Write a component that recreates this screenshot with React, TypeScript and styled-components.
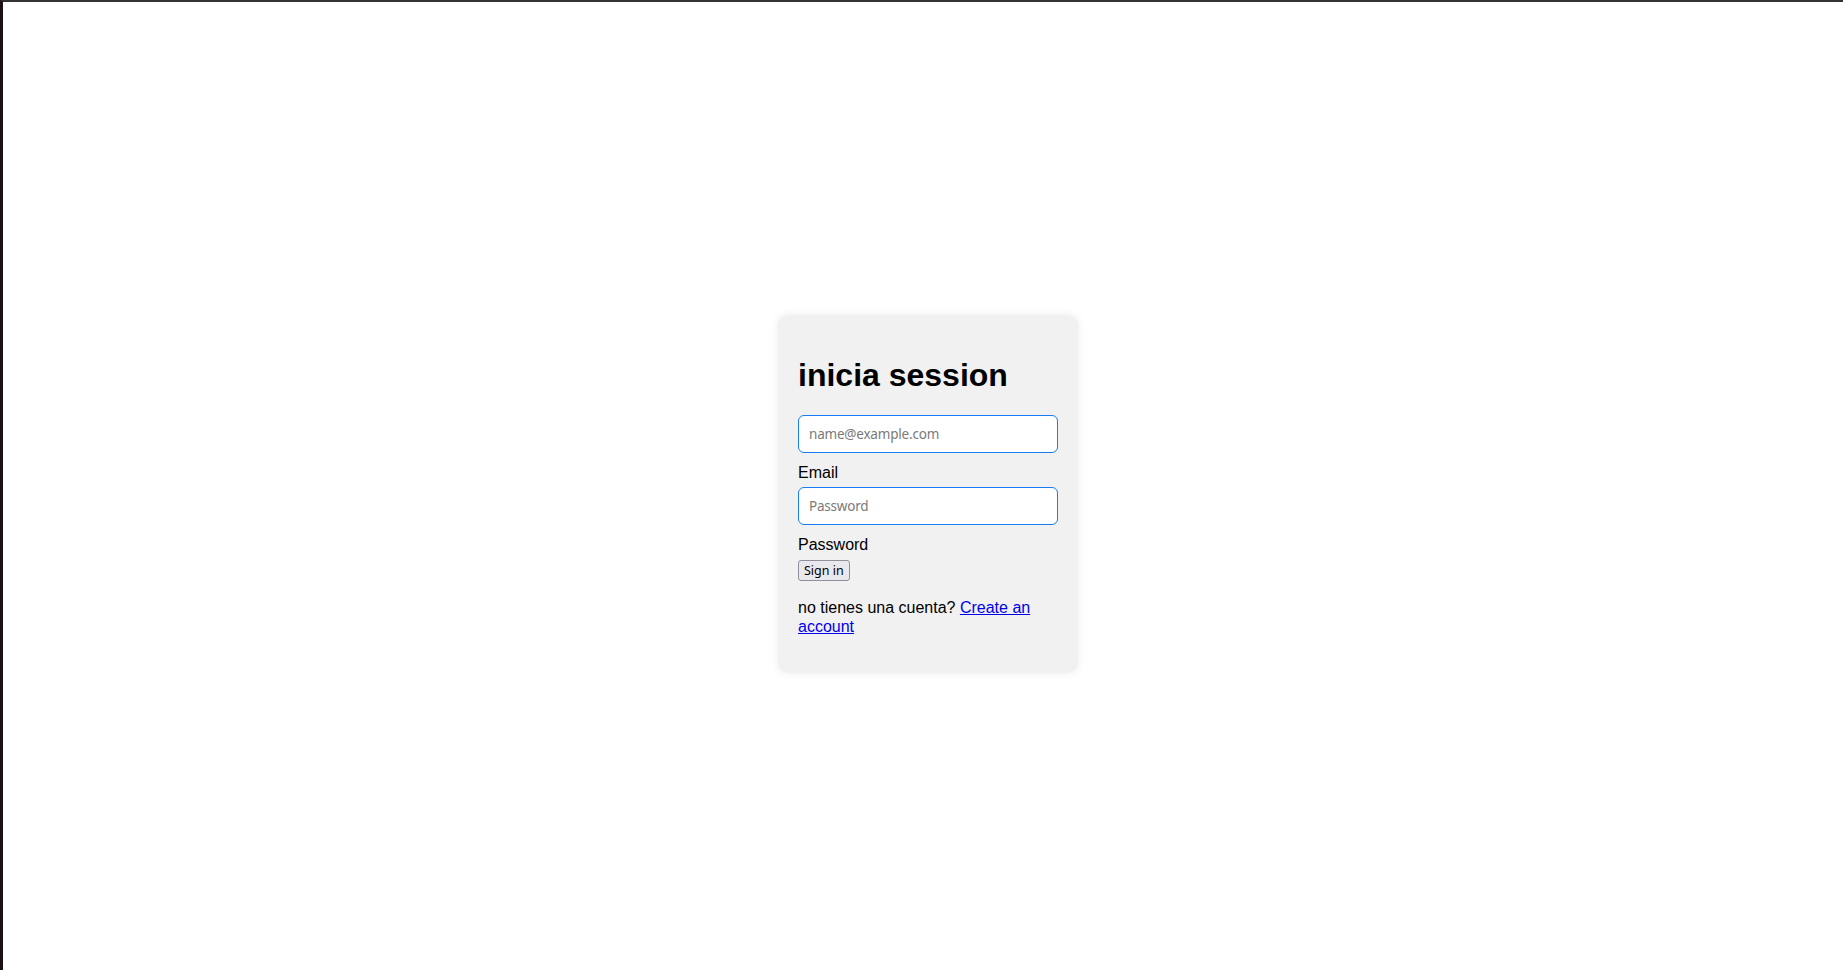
import React from "react";
import styled, { createGlobalStyle } from "styled-components";

const GlobalStyle = createGlobalStyle`
  html, body {
    margin: 0;
    padding: 0;
    background: #ffffff;
  }
  body {
    font-family: "Liberation Sans", Arial, sans-serif;
    color: #000;
  }
`;

const Page = styled.div`
  box-sizing: border-box;
  width: 1843px;
  height: 970px;
  border-top: 2px solid #333333;
  border-left: 3px solid #1c1117;
  padding: 16px 0 0 10px;
  display: flex;
  align-items: center;
  justify-content: center;
  background: #ffffff;
`;

const Card = styled.div`
  box-sizing: border-box;
  width: 300px;
  padding: 20px 20px 21px;
  background: #f1f1f1;
  border-radius: 10px;
  box-shadow: 0 0 10px rgba(0, 0, 0, 0.08);
`;

const Title = styled.h1`
  font-family: "Liberation Sans", Arial, sans-serif;
  font-size: 32px;
  line-height: 1.2;
  font-weight: 700;
  margin: 21.44px 0 20.5px;
`;

const Field = styled.div`
  display: flex;
  flex-direction: column;
  align-items: flex-start;
`;

const Input = styled.input`
  box-sizing: border-box;
  width: 100%;
  height: 38px;
  padding: 0 10px;
  border: 1px solid #1a7cf5;
  border-radius: 6px;
  background: #ffffff;
  font-family: "Noto Sans", "Open Sans", sans-serif;
  font-size: 13.5px;
  letter-spacing: -0.2px;
  outline: none;
  &::placeholder {
    color: #7a7a7a;
  }
`;

const Label = styled.label`
  font-family: "Liberation Sans", Arial, sans-serif;
  font-size: 16px;
  line-height: 1.2;
  margin: 10px 0 5px;
`;

const Button = styled.button`
  box-sizing: border-box;
  font-family: "Noto Sans", "Open Sans", sans-serif;
  font-size: 12.5px;
  height: 21.5px;
  padding: 0 5px;
  line-height: 19px;
  background: #e9e9ed;
  border: 1px solid #8f8f9d;
  border-radius: 3px;
  color: #000;
`;

const Footer = styled.p`
  font-family: "Liberation Sans", Arial, sans-serif;
  font-size: 16px;
  line-height: 1.2;
  margin: 16.5px 0 16px;
`;

const Link = styled.a`
  color: #0000ee;
  text-decoration: underline;
`;

export default function App() {
  return (
    <>
      <GlobalStyle />
      <Page>
        <Card>
          <Title>inicia session</Title>
          <Field>
            <Input type="email" placeholder="name@example.com" />
            <Label>Email</Label>
          </Field>
          <Field>
            <Input type="password" placeholder="Password" />
            <Label>Password</Label>
            <Button type="button">Sign in</Button>
          </Field>
          <Footer>
            no tienes una cuenta? <Link href="#">Create an account</Link>
          </Footer>
        </Card>
      </Page>
    </>
  );
}
